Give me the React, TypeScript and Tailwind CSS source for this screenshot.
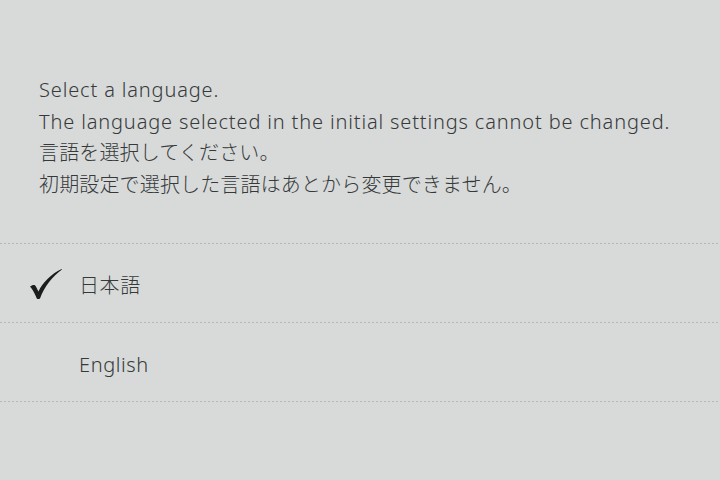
const font = { fontFamily: '"Noto Sans", "Noto Sans CJK JP", sans-serif' };

function Divider() {
  return (
    <div className="h-px w-full bg-[linear-gradient(to_right,#b3b7b6_50%,transparent_50%)] bg-[length:4px_1px]" />
  );
}

function Check() {
  return (
    <svg width="34" height="32" viewBox="0 0 34 32" className="text-[#1c1c1c]">
      <path
        d="M1 18.5 C3 17 4.5 16.6 6 17.2 C7.2 18.6 8.3 21 9.4 23.4 C14 14.5 22 6 32.6 1 L33 1.6 C23.5 8.5 15.5 18.5 11 30.4 C10.2 31.2 8.6 31.4 7.8 30.6 C6 26 3.8 21.6 1 18.5 Z"
        fill="currentColor"
      />
    </svg>
  );
}

export default function App() {
  const languages = [
    { label: '日本語', selected: true },
    { label: 'English', selected: false },
  ];

  return (
    <div className="w-[720px] h-[480px] bg-[#d7dad9] text-[#363939] overflow-hidden font-light" style={font}>
      <div className="pt-[74px] pl-[39px] text-[20px] leading-[31.7px]">
        <p className="tracking-[0.85px]">Select a language.</p>
        <p className="tracking-[0.85px]">The language selected in the initial settings cannot be changed.</p>
        <p className="tracking-[0.15px]">言語を選択してください。</p>
        <p className="tracking-[0.15px]">初期設定で選択した言語はあとから変更できません。</p>
      </div>

      <div className="mt-[42px]">
        <Divider />
        {languages.map((lang) => (
          <div key={lang.label}>
            <div className="h-[78px] flex items-center">
              <div className="w-[79px] pl-[29px] pt-[2px] flex items-center">
                {lang.selected && <Check />}
              </div>
              <span className="text-[20px] pt-[6px] tracking-[0.6px]">{lang.label}</span>
            </div>
            <Divider />
          </div>
        ))}
      </div>
    </div>
  );
}
